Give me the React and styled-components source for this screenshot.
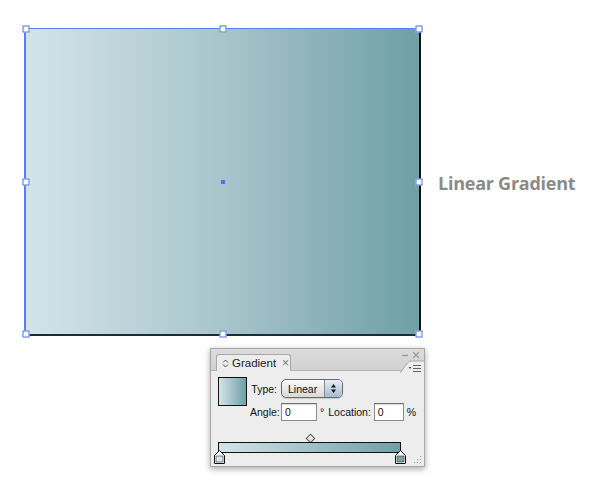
import styled, { createGlobalStyle } from "styled-components";

const Global = createGlobalStyle`
  html, body { margin: 0; padding: 0; background: #fff; }
  body { width: 600px; height: 504px; overflow: hidden; font-family: "Liberation Sans", Arial, sans-serif; }
`;

const Canvas = styled.div`
  position: relative;
  width: 600px;
  height: 504px;
  background: #fff;
`;

const Shape = styled.div`
  position: absolute;
  left: 24px;
  top: 28px;
  width: 397px;
  height: 308px;
  box-sizing: border-box;
  background: linear-gradient(to right, #d3e4e9 0%, #a8c5cb 50%, #6f9fa7 100%);
  border-top: 1px solid #5a7ff0;
  border-left: 2px solid #5a7ff0;
  border-right: 2px solid #111;
  border-bottom: 2px solid #1d2a3a;
`;

const Handle = styled.div`
  position: absolute;
  width: 5px;
  height: 5px;
  background: #fff;
  border: 1px solid #4a72f0;
  transform: translate(-50%, -50%);
  left: ${(p) => p.$x}%;
  top: ${(p) => p.$y}%;
`;

const CenterDot = styled.div`
  position: absolute;
  left: 50%;
  top: 50%;
  width: 4px;
  height: 4px;
  background: #4a72f0;
  transform: translate(-50%, -50%);
`;

const Caption = styled.div`
  position: absolute;
  left: 438px;
  top: 171px;
  font-family: "Open Sans", sans-serif;
  font-weight: 700;
  font-size: 18px;
  letter-spacing: -0.25px;
  color: #8a8a8a;
`;

const Panel = styled.div`
  position: absolute;
  left: 210px;
  top: 348px;
  width: 215px;
  height: 119px;
  box-sizing: border-box;
  border: 1px solid #a6a6a6;
  background: #ededed;
  box-shadow: 0 2px 6px rgba(0, 0, 0, 0.35);
  font-family: "Liberation Sans", Arial, sans-serif;
  font-size: 10.5px;
  color: #111;
  display: flex;
  flex-direction: column;
`;

const Header = styled.div`
  position: relative;
  height: 23px;
  background: linear-gradient(#dcdcdc, #d2d2d2);
  border-bottom: 1px solid #b4b4b4;
  display: flex;
  align-items: flex-end;
  padding-left: 5px;
`;

const Tab = styled.div`
  width: 75px;
  height: 17px;
  margin-bottom: -1px;
  box-sizing: border-box;
  background: #ededed;
  border: 1px solid #a8a8a8;
  border-bottom: none;
  border-radius: 3px 3px 0 0;
  display: flex;
  align-items: center;
  padding-left: 5px;
  gap: 3px;
  font-size: 11.5px;
  color: #222;
`;

const TabClose = styled.span`
  margin-left: 3px;
  color: #777;
  font-size: 12px;
`;

const HeaderControls = styled.svg`
  position: absolute;
  right: 0;
  top: 0;
  overflow: visible;
`;

const Body = styled.div`
  flex: 1;
  padding: 5px 0 0 7px;
  display: flex;
  flex-direction: column;
`;

const TopRow = styled.div`
  display: flex;
  gap: 3px;
`;

const Swatch = styled.div`
  width: 29px;
  height: 29px;
  box-sizing: border-box;
  border: 1px solid #111;
  margin-top: 1px;
  background: linear-gradient(to right, #d3e4e9, #6f9fa7);
`;

const Fields = styled.div`
  display: flex;
  flex-direction: column;
  gap: 5px;
  padding-top: 3px;
`;

const Row = styled.div`
  display: flex;
  align-items: center;
`;

const Label = styled.span`
  width: ${(p) => p.$w}px;
  text-align: right;
  padding-right: 4px;
  box-sizing: border-box;
`;

const Select = styled.div`
  width: 62px;
  height: 19px;
  box-sizing: border-box;
  border: 1px solid #6b6b6b;
  border-radius: 5px;
  background: linear-gradient(#fafafa, #d9d9d9);
  display: flex;
  align-items: center;
  overflow: hidden;
  box-shadow: 0 1px 1px rgba(0, 0, 0, 0.15);
`;

const SelectText = styled.span`
  flex: 1;
  padding-left: 6px;
`;

const SelectArrows = styled.div`
  width: 17px;
  height: 100%;
  border-left: 1px solid #8a8a8a;
  background: linear-gradient(#e6eef8, #a7bbd3);
  display: flex;
  align-items: center;
  justify-content: center;
`;

const Input = styled.div`
  width: ${(p) => p.$w}px;
  height: 18px;
  box-sizing: border-box;
  border: 1px solid #8c8c8c;
  border-top-color: #6e6e6e;
  background: #fff;
  padding-left: 3px;
  line-height: 16px;
  box-shadow: inset 0 1px 1px rgba(0, 0, 0, 0.15);
`;

const Unit = styled.span`
  padding: 0 ${(p) => p.$pr || 3}px 0 3px;
`;

const Slider = styled.div`
  position: relative;
  margin-top: 15px;
  width: 183px;
  height: 30px;
`;

const Bar = styled.div`
  position: absolute;
  left: 0;
  top: 6px;
  width: 183px;
  height: 11px;
  box-sizing: border-box;
  border: 1px solid #111;
  background: linear-gradient(to right, #d3e4e9, #6f9fa7);
`;

const Diamond = styled.div`
  position: absolute;
  left: 89px;
  top: -1px;
  width: 5px;
  height: 5px;
  border: 1px solid #555;
  background: linear-gradient(135deg, #fff, #ccc);
  transform: rotate(45deg);
`;

const Stop = styled.svg`
  position: absolute;
  top: 14px;
  left: ${(p) => p.$x}px;
`;

const Grip = styled.svg`
  position: absolute;
  right: 2px;
  bottom: 2px;
`;

const handles = [
  [0, 0], [50, 0], [100, 0],
  [0, 50], [100, 50],
  [0, 100], [50, 100], [100, 100],
];

const StopIcon = ({ x, fill }) => (
  <Stop $x={x} width="11" height="14" viewBox="0 0 11 14">
    <path d="M5.5 0.5 L10.5 5.5 L10.5 13.5 L0.5 13.5 L0.5 5.5 Z" fill="#fff" stroke="#111" />
    <rect x="2" y="6" width="7" height="6" fill={fill} stroke="#333" strokeWidth="0.6" />
  </Stop>
);

export default function App() {
  return (
    <Canvas>
      <Global />
      <Shape>
        {handles.map(([x, y]) => (
          <Handle key={`${x}-${y}`} $x={x} $y={y} />
        ))}
        <CenterDot />
      </Shape>
      <Caption>Linear Gradient</Caption>

      <Panel>
        <Header>
          <Tab>
            <svg width="7" height="9" viewBox="0 0 7 9">
              <path d="M1 3.5 L3.5 1 L6 3.5 M1 5.5 L3.5 8 L6 5.5" fill="none" stroke="#555" strokeWidth="1" />
            </svg>
            <span>Gradient</span>
            <TabClose>×</TabClose>
          </Tab>
          {/* minimize, close, and the flyout-menu corner */}
          <HeaderControls width="28" height="25" viewBox="0 0 28 25">
            <path d="M6 6.5 H12" stroke="#999" strokeWidth="1.4" />
            <path d="M17 3 L23 9 M23 3 L17 9" stroke="#999" strokeWidth="1.1" />
            <path d="M4 25 L4 24 L11.5 14 Q13 12 15.5 12 L28 12 L28 25 Z" fill="#ededed" />
            <path d="M4 24 L11.5 14 Q13 12 15.5 12 L28 12" fill="none" stroke="#ababab" strokeWidth="1" />
            <path d="M12.5 18 L15.5 18 L14 20 Z" fill="#555" />
            <path d="M17 16.5 H25 M17 19.5 H25 M17 22.5 H25" stroke="#666" strokeWidth="1" />
          </HeaderControls>
        </Header>
        <Body>
          <TopRow>
            <Swatch />
            <Fields>
              <Row>
                <Label $w={31}>Type:</Label>
                <Select>
                  <SelectText>Linear</SelectText>
                  <SelectArrows>
                    <svg width="7" height="11" viewBox="0 0 7 11">
                      <path d="M3.5 1 L6 4.5 L1 4.5 Z M3.5 10 L6 6.5 L1 6.5 Z" fill="#111" />
                    </svg>
                  </SelectArrows>
                </Select>
              </Row>
              <Row>
                <Label $w={31}>Angle:</Label>
                <Input $w={36}>0</Input>
                <Unit $pr={4}>°</Unit>
                <span style={{ paddingRight: 3 }}>Location:</span>
                <Input $w={30}>0</Input>
                <Unit>%</Unit>
              </Row>
            </Fields>
          </TopRow>
          <Slider>
            <Diamond />
            <Bar />
            <StopIcon x={-4} fill="#dde6e9" />
            <StopIcon x={177} fill="#7aa3aa" />
          </Slider>
        </Body>
        <Grip width="10" height="10" viewBox="0 0 10 10">
          {[[8, 2], [8, 5], [8, 8], [5, 5], [5, 8], [2, 8]].map(([cx, cy]) => (
            <rect key={`${cx}${cy}`} x={cx} y={cy} width="1" height="1" fill="#999" />
          ))}
        </Grip>
      </Panel>
    </Canvas>
  );
}
